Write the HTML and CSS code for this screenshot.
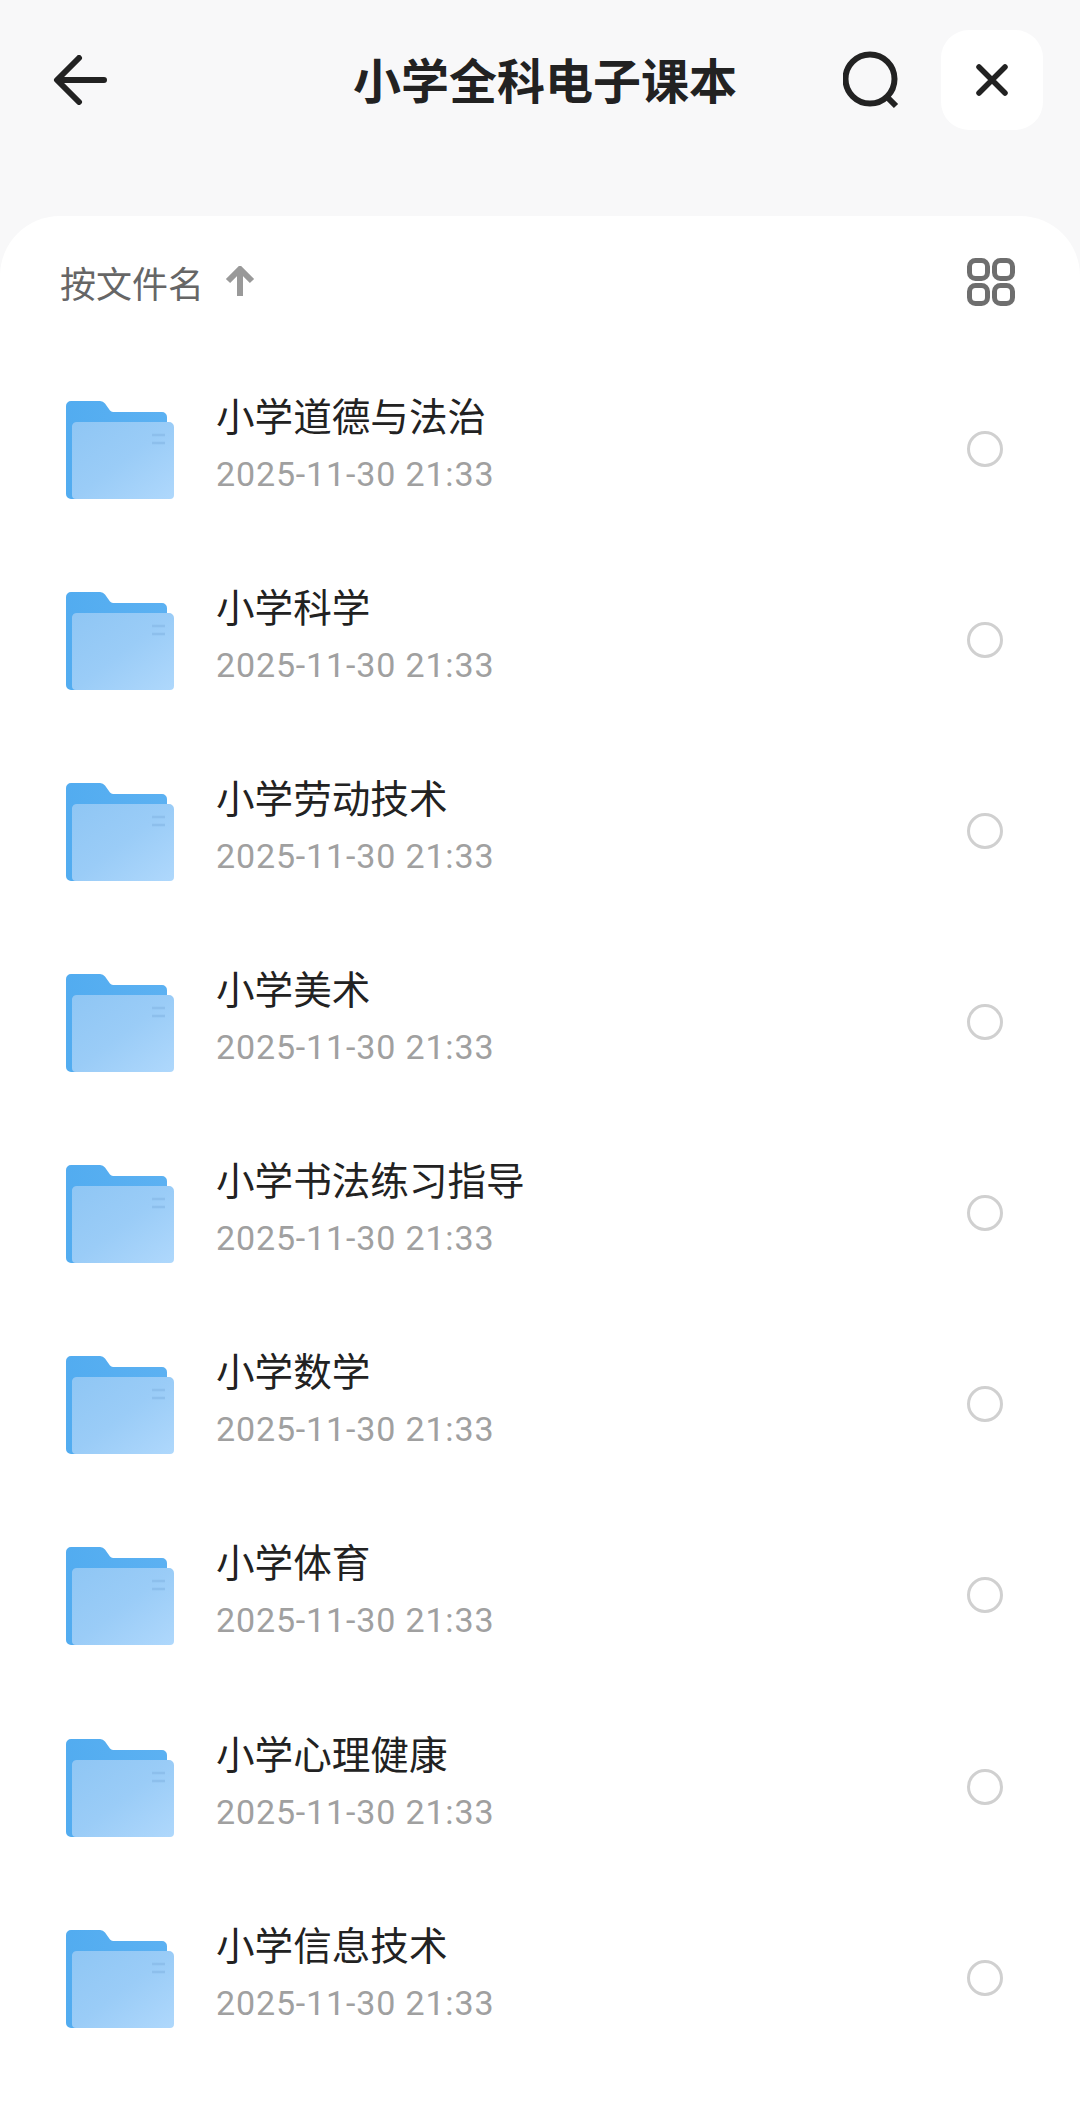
FILE: index.html
```html
<!DOCTYPE html>
<html lang="zh-CN">
<head>
<meta charset="utf-8">
<title>小学全科电子课本</title>
<link rel="stylesheet" href="styles.css">
</head>
<body>
<svg class="defs" width="0" height="0" aria-hidden="true">
  <defs>
    <linearGradient id="fback" x1="0" y1="0" x2="1" y2="0">
      <stop offset="0" stop-color="#52acf0"/>
      <stop offset="1" stop-color="#5cb1f2"/>
    </linearGradient>
    <linearGradient id="ffront" x1="0" y1="0" x2="1" y2="1">
      <stop offset="0" stop-color="#8fc6f4"/>
      <stop offset="0.5" stop-color="#9accf7"/>
      <stop offset="1" stop-color="#afd8fc"/>
    </linearGradient>
    <symbol id="folder" viewBox="0 0 108 100">
      <path d="M0 6a5 5 0 0 1 5-5h29a6 6 0 0 1 5 2.600l5 6.900a4 4 0 0 0 3 1.500h49a5 5 0 0 1 5 5V94a5 5 0 0 1-5 5H5a5 5 0 0 1-5-5z" fill="url(#fback)"/>
      <path d="M6 26a5 5 0 0 1 5-4h92a5 5 0 0 1 5 5v68a4 4 0 0 1-4 4H10a4 4 0 0 1-4-4z" fill="url(#ffront)"/>
      <path d="M86 35h13M86 43h13" stroke="#8dbfec" stroke-width="2.500" fill="none"/>
    </symbol>
  </defs>
</svg>
<main class="page">
  <header class="topbar">
    <button class="icon back" aria-label="返回">
      <svg width="54" height="50" viewBox="0 0 54 50"><path d="M26 3 4 25 26 47M5 25h46" fill="none" stroke="#222" stroke-width="6" stroke-linecap="round" stroke-linejoin="round"/></svg>
    </button>
    <h1 class="title">小学全科电子课本</h1>
    <div class="actions">
      <button class="icon search" aria-label="搜索">
        <svg width="58" height="58" viewBox="0 0 58 58"><circle cx="27" cy="28" r="24.500" fill="none" stroke="#222" stroke-width="6"/><path d="M44 46 53 55" fill="none" stroke="#222" stroke-width="6"/></svg>
      </button>
      <button class="close" aria-label="关闭">
        <svg width="32" height="32" viewBox="0 0 32 32"><path d="M3 3 29 29M29 3 3 29" fill="none" stroke="#222" stroke-width="5.500" stroke-linecap="round"/></svg>
      </button>
    </div>
  </header>
  <section class="card">
    <div class="toolbar">
      <div class="sort">
        <span>按文件名</span>
        <svg class="sort-arrow" width="30" height="32" viewBox="0 0 30 32"><path d="M15 30V5M3 15 15 3l12 12" fill="none" stroke="#999" stroke-width="6" stroke-linejoin="round"/></svg>
      </div>
      <svg class="grid" width="48" height="48" viewBox="0 0 48 48">
        <g fill="none" stroke="#6e6e6e" stroke-width="5">
          <rect x="2.500" y="2.500" width="18" height="18" rx="6"/>
          <rect x="27.500" y="2.500" width="18" height="18" rx="6"/>
          <rect x="2.500" y="27.500" width="18" height="18" rx="6"/>
          <rect x="27.500" y="27.500" width="18" height="18" rx="6"/>
        </g>
      </svg>
    </div>
    <ul class="list">
      <li class="row"><svg class="folder"><use href="#folder"/></svg><div class="meta"><div class="name">小学道德与法治</div><div class="date">2025-11-30 21:33</div></div><span class="radio"></span></li>
      <li class="row"><svg class="folder"><use href="#folder"/></svg><div class="meta"><div class="name">小学科学</div><div class="date">2025-11-30 21:33</div></div><span class="radio"></span></li>
      <li class="row"><svg class="folder"><use href="#folder"/></svg><div class="meta"><div class="name">小学劳动技术</div><div class="date">2025-11-30 21:33</div></div><span class="radio"></span></li>
      <li class="row"><svg class="folder"><use href="#folder"/></svg><div class="meta"><div class="name">小学美术</div><div class="date">2025-11-30 21:33</div></div><span class="radio"></span></li>
      <li class="row"><svg class="folder"><use href="#folder"/></svg><div class="meta"><div class="name">小学书法练习指导</div><div class="date">2025-11-30 21:33</div></div><span class="radio"></span></li>
      <li class="row"><svg class="folder"><use href="#folder"/></svg><div class="meta"><div class="name">小学数学</div><div class="date">2025-11-30 21:33</div></div><span class="radio"></span></li>
      <li class="row"><svg class="folder"><use href="#folder"/></svg><div class="meta"><div class="name">小学体育</div><div class="date">2025-11-30 21:33</div></div><span class="radio"></span></li>
      <li class="row"><svg class="folder"><use href="#folder"/></svg><div class="meta"><div class="name">小学心理健康</div><div class="date">2025-11-30 21:33</div></div><span class="radio"></span></li>
      <li class="row"><svg class="folder"><use href="#folder"/></svg><div class="meta"><div class="name">小学信息技术</div><div class="date">2025-11-30 21:33</div></div><span class="radio"></span></li>
    </ul>
  </section>
</main>
</body>
</html>
```

FILE: styles.css
```css
* { box-sizing: border-box; }
html, body { margin: 0; padding: 0; }
body {
  width: 1080px;
  height: 2107px;
  overflow: hidden;
  background: #f8f8f9;
  font-family: "Noto Sans CJK SC", "Noto Sans", sans-serif;
  color: #222;
}
.defs { display: block; height: 0; }
.page { display: flex; flex-direction: column; height: 2107px; }
button { border: 0; padding: 0; background: none; display: flex; align-items: center; justify-content: center; }
.topbar {
  position: relative;
  height: 216px;
  flex: none;
  display: flex;
  align-items: flex-start;
  justify-content: space-between;
  padding: 30px 37px 0 53px;
}
.back { height: 100px; }
.title {
  position: absolute;
  left: 10px;
  right: 0;
  top: 28px;
  margin: 0;
  height: 100px;
  line-height: 100px;
  text-align: center;
  font-size: 48px;
  font-weight: 700;
  color: #222;
}
.actions { display: flex; align-items: center; gap: 40px; position: relative; }
.search { height: 100px; width: 58px; }
.close { width: 102px; height: 100px; background: #fff; border-radius: 28px; }
.card {
  flex: 1;
  background: #fff;
  border-radius: 60px 60px 0 0;
  padding: 0;
}
.toolbar {
  height: 137px;
  display: flex;
  align-items: center;
  justify-content: space-between;
  padding: 0 65px 6px 60px;
}
.sort {
  display: flex;
  align-items: center;
  gap: 21px;
  font-size: 36px;
  color: #666;
  line-height: 44px;
}
.list { list-style: none; margin: 0; padding: 0; }
.row {
  height: 191.15px;
  display: flex;
  align-items: center;
  padding: 0 77px 0 66px;
}
.folder { width: 108px; height: 100px; flex: none; margin-top: 2px; }
.meta { flex: 1; margin-left: 42px; padding-bottom: 14px; display: flex; flex-direction: column; gap: 14px; }
.name { font-size: 38.6px; line-height: 50px; color: #222; }
.date { font-family: Roboto, "Noto Sans", sans-serif; font-size: 34px; line-height: 42px; color: #a0a0a0; letter-spacing: 0.85px; }
.radio { width: 36px; height: 36px; border: 3px solid #d0d0d0; border-radius: 50%; flex: none; }
```
